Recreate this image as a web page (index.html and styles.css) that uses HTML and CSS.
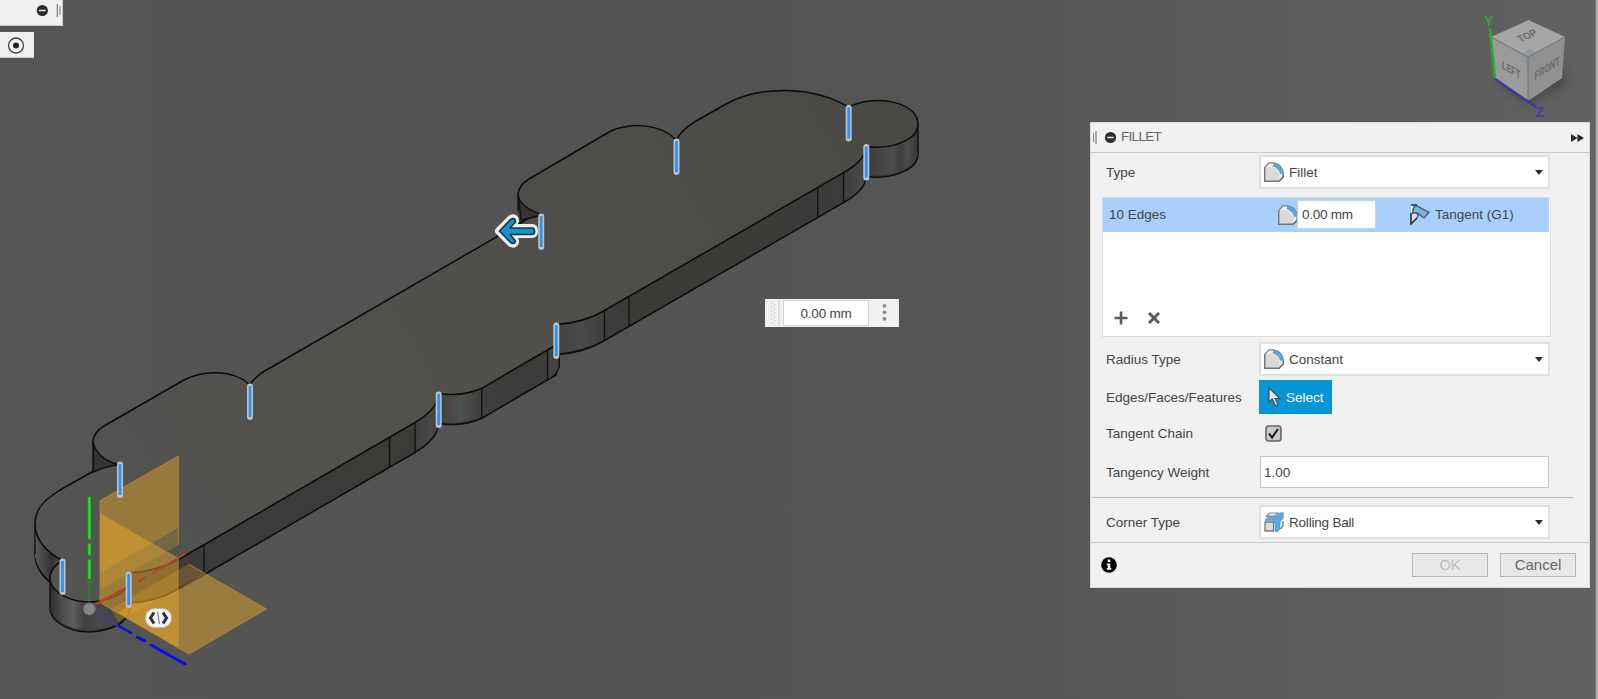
FILE: index.html
```html
<!DOCTYPE html>
<html lang="en">
<head>
<meta charset="utf-8">
<title>Fillet</title>
<link rel="stylesheet" href="styles.css">
</head>
<body>
<main class="viewport">
  <svg class="scene" viewBox="0 0 1598 699" width="1598" height="699">
    <defs>
      <linearGradient id="faceFill" gradientUnits="userSpaceOnUse" x1="100" y1="560" x2="880" y2="110">
        <stop offset="0" stop-color="#535351"/><stop offset=".45" stop-color="#51504d"/><stop offset="1" stop-color="#4a4946"/>
      </linearGradient>
      <linearGradient id="wallFill" gradientUnits="userSpaceOnUse" x1="0" y1="0" x2="1000" y2="0">
        <stop offset=".035" stop-color="#5a5a5a"/><stop offset=".048" stop-color="#3c3c3c"/>
        <stop offset=".051" stop-color="#303030"/><stop offset=".062" stop-color="#4d4d4d"/><stop offset=".073" stop-color="#5e5e5e"/><stop offset=".084" stop-color="#414141"/><stop offset=".1" stop-color="#494949"/><stop offset=".13" stop-color="#3c3c3c"/>
        <stop offset=".178" stop-color="#3b3b3a"/><stop offset=".41" stop-color="#3b3b38"/>
        <stop offset=".43" stop-color="#484847"/><stop offset=".44" stop-color="#414140"/><stop offset=".46" stop-color="#505050"/><stop offset=".482" stop-color="#3e3e3d"/>
        <stop offset=".54" stop-color="#3b3b3a"/><stop offset=".556" stop-color="#434342"/><stop offset=".58" stop-color="#4a4a49"/><stop offset=".605" stop-color="#3d3d3c"/>
        <stop offset=".63" stop-color="#3a3a37"/><stop offset=".84" stop-color="#3b3b39"/><stop offset=".862" stop-color="#484846"/>
        <stop offset=".87" stop-color="#3f3f3f"/><stop offset=".893" stop-color="#4d4d4c"/><stop offset=".9" stop-color="#3f3f3f"/><stop offset=".908" stop-color="#4c4c4b"/><stop offset=".918" stop-color="#353535"/>
      </linearGradient>
      <path id="outline" d="M62.5 560.5C46 552 35 539 35 524C35 512 42 503 50 497Q54 494 60 490L90 473Q101 467 119 464.500C103 461 93 453 93 441Q94 432 104 426L183 380.500C202 370 234 369 250 385Q256 375 270 368L530 217.500L541 215.500C526 211 518 205 518 194Q519 185 529 179L609 132C630 121 661 124 676.500 140Q681 130 696 121L726 104C760 85 813 86 848.500 107C878 93 918 103 918 124C918 139 894 150 866 146.500Q866 160 843.500 172.700L604.500 310.500Q584 323 556 324.500L556 345L481.700 388.300Q463 397 438.500 393.500Q438 409 415 422.500L178.500 559.500Q155 572 128.500 573L130 580Q127 590 118 595C100 604 75 605 59 593Q50 587 50 577Q51 567 62.500 560.500Z"/>
      <g id="sweep2"><use href="#outline"/><use href="#outline" y="1"/></g>
      <g id="sweep4"><use href="#sweep2"/><use href="#sweep2" y="2"/></g>
      <g id="sweep8"><use href="#sweep4"/><use href="#sweep4" y="4"/></g>
      <g id="sweep16"><use href="#sweep8"/><use href="#sweep8" y="8"/></g>
      <g id="edge"><path d="M0 .5V31" stroke="#bcc3c9" stroke-width="6" stroke-linecap="round"/><path d="M0 0V31" stroke="#2f90f6" stroke-width="2.800"/></g>
      <filter id="soft" x="-50%" y="-50%" width="200%" height="200%"><feGaussianBlur stdDeviation="5"/></filter>
    </defs>

    <!-- extruded body -->
    <use href="#outline" y="30" fill="#3b3b38" stroke="#0c0c0c" stroke-width="1.500"/>
    <g fill="url(#wallFill)"><use href="#sweep16"/><use href="#sweep16" y="13"/></g>
    <path d="M548 349L557 343L559 356V366Q558 374 548 379.500Z" fill="#434342"/>
    <use href="#outline" fill="url(#faceFill)" stroke="#0a0a0a" stroke-width="1.500" stroke-linejoin="round"/>
    <g stroke="#111" stroke-width="1.400" fill="none">
      <path d="M35 524V554M50 577V607M130.500 590V610M93 442V472M518 195V211M918 123V153M817.700 187.500V217.500M843.500 173V202.500M629 297.500V327M604.500 310.500V340M547.500 350V380M559.300 354V366Q558 374 548 380M481.700 388V418M415 422.500V452M389.500 437V467M204 545V575M178.500 559.500V589"/>
      <path d="M518.500 197Q521 207 541 214.500L532 217.500L521 220Z" fill="#353534"/>
      <path d="M93.500 444Q98 459 118 464.500Q104 467 93.500 472Z" fill="#353534"/>
    </g>

    <!-- construction planes -->
    <g fill="#eba928">
      <path d="M100 500.700L178.300 456V528L100 573Z" opacity=".45"/>
      <path d="M100 573L178.300 528V545L100 590Z" opacity=".22"/>
      <path d="M100 513.500L178.300 558.500V647.500L100 602.500Z" opacity=".48"/>
      <path d="M188.500 564L204 573L118 622L111 609Z" opacity=".25"/>
      <path d="M204 573L266.500 609L189 654L118 613L130 604Q154 604 178 589Z" opacity=".46"/>
    </g>
    <g fill="none" stroke="#c08c2c" stroke-width="1" opacity=".75">
      <path d="M100 500.700L178.300 456V545M100 500.700V602.500L178.300 647.500V558.500L100 513.500M188.500 564L266.500 609L189 654L111 609"/>
    </g>

    <!-- origin axes -->
    <g fill="none" stroke-linecap="round">
      <path d="M89.300 498V538M89.300 545V554M89.300 561V579" stroke="#08e80c" stroke-width="3"/>
      <path d="M89.300 580V600" stroke="#41713f" stroke-width="3"/>
      <path d="M96 604L126 588M139 581L145 578M153 573L185 554" stroke="#b5412d" stroke-width="2"/>
      <path d="M97 614L117 625" stroke="#444188" stroke-width="2"/>
      <path d="M119 626L131 633M137 637L145 641M151 645L185 664" stroke="#0a0af0" stroke-width="2.600"/>
    </g>
    <circle cx="89.300" cy="609" r="6" fill="#858585" stroke="#6c6c6c"/>

    <!-- selected edges -->
    <use href="#edge" x="120" y="464"/><use href="#edge" x="62.500" y="561"/><use href="#edge" x="128.700" y="574"/>
    <use href="#edge" x="250" y="386"/><use href="#edge" x="438.700" y="394"/><use href="#edge" x="556.300" y="325"/>
    <use href="#edge" x="541.200" y="216"/><use href="#edge" x="676.500" y="141"/><use href="#edge" x="848.700" y="107.500"/><use href="#edge" x="866.300" y="146.500"/>

    <!-- drag arrow -->
    <g stroke-linejoin="round" stroke-linecap="round">
      <path d="M499 231L511 219Q515 217 515 221L510 228H532Q534 228 534 231Q534 234 532 234H510L515 241Q515 245 511 243Z" fill="#eee" stroke="#ededed" stroke-width="8"/>
      <path d="M499.500 231L510.500 219.500Q515.500 217 515.500 222L510 228H532Q534.500 228 534.500 231.500Q534.500 234.500 532 234.500H510L515.500 241Q514.500 245 510.500 242.500Z" fill="#1594cc" stroke="#173441" stroke-width="1.700"/>
    </g>

    <!-- flip manipulator -->
    <rect x="145.500" y="608.500" width="26" height="19" rx="9" fill="#f3f3f3" stroke="#b7b7b7"/>
    <path d="M154 612.500L150.500 618L154 623.500M163 612.500L166.500 618L163 623.500" fill="none" stroke="#333" stroke-width="3"/>
    <path d="M157.500 612L159.500 624" stroke="#777" stroke-width="1"/>

    <!-- view cube -->
    <path d="M1496 82L1528 104L1568 84L1560 68Z" fill="#333" opacity=".5" filter="url(#soft)"/>
    <path d="M1491 37L1528.500 20L1565 37L1528 57Z" fill="#a6a6a6"/>
    <path d="M1491 37L1528 57V101L1495 79Z" fill="#9b9b9b"/>
    <path d="M1565 37L1528 57V101L1562 78Z" fill="#919191"/>
    <path d="M1521 54L1529 49L1536 53V60L1528 65L1521 61Z" fill="#8b929b" opacity=".65"/>
    <path d="M1491 37L1528 57L1565 37M1528 57V101" fill="none" stroke="#737373" stroke-width="1"/>
    <g class="cube-text">
      <text transform="matrix(.8 -.36 .6 .75 1520.500 42.500)">TOP</text>
      <text transform="matrix(.66 .38 0 1.050 1502 68.500)">LEFT</text>
      <text transform="matrix(.66 -.42 0 1.050 1534.500 80)">FRONT</text>
    </g>
    <path d="M1490 29L1495 78" stroke="#27ae31" stroke-width="2.500"/>
    <path d="M1495 79L1536 107" stroke="#3838a4" stroke-width="2.500"/>
    <text class="axis axis-y" x="1484" y="26">Y</text>
    <text class="axis axis-z" x="1535.500" y="116.500">Z</text>
  </svg>

  <div class="browser-bar">
    <svg width="62" height="25" viewBox="0 0 62 25"><circle cx="42.300" cy="10.500" r="5.600" fill="#2c2c2c"/><path d="M39 10.500H45.600" stroke="#eee" stroke-width="1.500"/><path d="M57.300 4V17" stroke="#777" stroke-width="1.200"/><path d="M60 6V15" stroke="#888" stroke-width="1.200"/></svg>
  </div>
  <div class="visibility-toggle">
    <svg width="34" height="25" viewBox="0 0 34 25"><circle cx="16" cy="13.500" r="7.500" fill="none" stroke="#444" stroke-width="1.300"/><circle cx="16" cy="13.500" r="3" fill="#222"/></svg>
  </div>

  <div class="value-float">
    <svg width="18" height="28" viewBox="0 0 18 28"><path d="M6.500 3V26M9.500 5V26" stroke="#d9d9d9" stroke-width="1.500" stroke-dasharray="2 2"/><path d="M14 0V28" stroke="#d6d6d6" stroke-width="1.500"/></svg>
    <span class="value-box"><span class="mm">0.00 mm</span></span>
    <svg class="dots" width="30" height="28" viewBox="0 0 30 28"><g fill="#8a8a8a"><circle cx="15.500" cy="6.800" r="1.900"/><circle cx="15.500" cy="13.300" r="1.900"/><circle cx="15.500" cy="19.800" r="1.900"/></g></svg>
  </div>

  <section class="panel">
    <svg width="0" height="0" class="defs">
      <symbol id="fillet" viewBox="0 0 20 20">
        <path d="M.7 19.300V5.500L5 .8H10Q18.500 3 19.300 11V15L15 19.300Z" fill="#f4f4f4" stroke="#777" stroke-width="1.200"/>
        <path d="M1.300 18.700V6.500H9Q14 9 14.500 18.700Z" fill="#dadada"/>
        <path d="M9.500 1Q18 2.500 19.300 10.500L16 12.500Q15 6 8.500 4.300Z" fill="#57a6dc"/>
        <path d="M1.300 18.700V6.500L3 5H8Q14.500 7 15.500 13V18.700Z" fill="#dadada"/>
        <path d="M19.300 11V15L15 19.300H.7V6" fill="none" stroke="#747474" stroke-width="1.400"/>
      </symbol>
    </svg>
    <header class="panel-head">
      <svg width="30" height="30" viewBox="0 0 30 30"><path d="M2.500 11V20" stroke="#888"/><path d="M5 9V22" stroke="#777" stroke-width="1.200"/><circle cx="19.500" cy="15.500" r="5.600" fill="#2c2c2c"/><path d="M16.300 15.500H22.700" stroke="#eee" stroke-width="1.500"/></svg>
      <h1 class="panel-title">FILLET</h1>
      <svg class="expand" width="13" height="8" viewBox="0 0 13 8"><path d="M0 0L6.500 4L0 8ZM6.500 0L13 4L6.500 8Z" fill="#282828"/></svg>
    </header>
    <div class="panel-body">
      <div class="row row-type"><label class="label">Type</label>
        <div class="select"><svg class="icon"><use href="#fillet"/></svg><span class="grow">Fillet</span><i class="caret"></i></div></div>
      <div class="list">
        <div class="list-row">
          <span class="edge-count">10 Edges</span>
          <svg class="icon"><use href="#fillet"/></svg>
          <span class="radius"><span class="mm">0.00 mm</span></span>
          <svg class="tangent-icon" width="20" height="21" viewBox="0 0 20 21"><path d="M1 1L5.500 6L1 9Z" fill="#fff"/><path d="M1 20V10L6 7.500Q9 11 7 14Z" fill="#ddd" stroke="#555" stroke-width="1.300"/><path d="M3 9Q2 4 6 1.500L19 8.500L14 14L7 9Z" fill="#7fb4db" stroke="#36536b" stroke-width="1.300"/><path d="M1 1H7M1 9V20L7 14" fill="none" stroke="#333" stroke-width="1.300"/></svg>
          <span class="tangent">Tangent (G1)</span>
        </div>
        <div class="list-tools">
          <svg width="14" height="14" viewBox="0 0 14 14"><path d="M7 .5V13.500M.5 7H13.500" stroke="#5c5c5c" stroke-width="2.600"/></svg>
          <svg width="12" height="12" viewBox="0 0 12 12"><path d="M1 1L11 11M11 1L1 11" stroke="#5c5c5c" stroke-width="3"/></svg>
        </div>
      </div>
      <div class="row row-radius"><label class="label">Radius Type</label>
        <div class="select"><svg class="icon"><use href="#fillet"/></svg><span class="grow">Constant</span><i class="caret"></i></div></div>
      <div class="row row-pick"><label class="label">Edges/Faces/Features</label>
        <button class="pick"><svg width="13" height="20" viewBox="0 0 13 20"><path d="M1 1V15L4.300 12L7.500 19L10 17.700L7 11.500H12Z" fill="#e8e8e8" stroke="#3c4a52" stroke-width="1.100"/></svg>Select</button></div>
      <div class="row row-chain"><label class="label">Tangent Chain</label>
        <svg class="check" width="17" height="17" viewBox="0 0 17 17"><rect x="1" y="1" width="15" height="15" rx="3" fill="#c9c9c9" stroke="#666" stroke-width="1.600"/><path d="M4 8.500L7 12.500L13 4" fill="none" stroke="#151515" stroke-width="2"/></svg></div>
      <div class="row row-weight"><label class="label">Tangency Weight</label><div class="input">1.00</div></div>
      <div class="rule"></div>
      <div class="row row-corner"><label class="label">Corner Type</label>
        <div class="select"><svg class="icon" viewBox="0 0 20 20"><path d="M2 5L5.500 1H14L11 4H3" fill="#eee" stroke="#888" stroke-width="1.200"/><path d="M1 10H9.500V19H1Z" fill="#ddd" stroke="#777" stroke-width="1.300"/><path d="M19 9V14L16.500 17" fill="none" stroke="#777" stroke-width="1.300"/><path d="M1 8.500L4 4.500H12L16 .8H19.300V6L16 10V17L14 19.500H11V12Q11 9 8 8.500Z" fill="#5aaae0" stroke="#458fc2" stroke-width=".6"/></svg><span class="grow rolling">Rolling Ball</span><i class="caret"></i></div></div>
    </div>
    <footer class="panel-foot">
      <svg class="info" width="16" height="16" viewBox="0 0 16 16"><circle cx="8" cy="8" r="7.800" fill="#000"/><path d="M6.700 2.500H9.300V5H6.700ZM5.800 6.500H9.300V11H10.300V12.800H5.800V11H6.800V8.200H5.800Z" fill="#fff"/></svg>
      <button class="btn btn-off">OK</button>
      <button class="btn">Cancel</button>
    </footer>
  </section>
  <div class="window-edge"></div>
</main>
</body>
</html>
```
FILE: styles.css
```css
* { box-sizing: border-box; }
body { margin: 0; overflow: hidden; font: 13.5px "Liberation Sans", Arial, sans-serif; color: #444; }
.viewport { position: relative; width: 1598px; height: 699px; overflow: hidden; background: linear-gradient(90deg, #555 0%, #535353 35%, #565656 65%, #616161 100%); }
.scene { display: block; }
svg { flex: none; }
.defs { position: absolute; }
.cube-text { font: bold 11px "Liberation Sans", Arial, sans-serif; fill: #666a6f; }
.axis { font: bold 14px "Liberation Sans", Arial, sans-serif; }
.axis-y { fill: #3e9c46; }
.axis-z { fill: #4040a8; }

.browser-bar, .visibility-toggle { position: absolute; left: 0; background: #f1f1f1; display: flex; }
.browser-bar { top: 0; width: 63px; height: 26px; border-right: 1px solid #ccc; border-bottom: 1px solid #ccc; }
.visibility-toggle { top: 32px; width: 34px; height: 26px; border-bottom: 1px solid #ccc; }

.value-float { position: absolute; left: 765px; top: 299px; width: 134px; height: 28px; display: flex; align-items: center; background: #f1f1f1; }
.value-box { width: 86px; height: 26px; border: 1px solid #d2d2d2; background: #fff; display: flex; align-items: center; justify-content: center; }
.mm { letter-spacing: -.25px; }

.panel { position: absolute; left: 1090px; top: 122px; width: 500px; height: 466px; display: flex; flex-direction: column; background: #f1f1f1; border: 1px solid #dadada; }
.panel-head { height: 30px; display: flex; align-items: center; border-bottom: 1px solid #cbcbcb; padding-right: 5px; margin-bottom: 2px; }
.panel-head svg:first-child { margin-top: -2px; }
.panel-title { margin: 0 auto 2px 0; font-size: 13.5px; font-weight: 400; letter-spacing: -.7px; color: #666; }
.panel-body { height: 387px; display: flex; flex-direction: column; }
.row { display: flex; align-items: center; padding-left: 15px; flex: none; }
.label { width: 153px; flex: none; }
.select { width: 291px; height: 34px; display: flex; align-items: center; padding: 0 5px 0 4px; background: #fff; border: 2px solid #e0e0e0; }
.select .icon { margin-left: -1px; margin-right: 5px; }
.icon { width: 20px; height: 20px; }
.grow { flex: 1; }
.rolling { letter-spacing: -.2px; }
.caret { border: 4px solid transparent; border-top: 5px solid #2c2c2c; border-bottom: 0; }
.list { width: 449px; height: 140px; margin: 8px 0 5px 11px; border: 1px solid #dcdcdc; background: #fff; display: flex; flex-direction: column; justify-content: space-between; flex: none; }
.list-row { height: 34px; background: #a9cffe; display: flex; align-items: center; padding: 0 0 1px 6px; margin-right: 1px; }
.edge-count { width: 169px; }
.list-row .icon { margin-right: -1px; }
.radius { width: 79px; height: 29px; background: #fff; border: 1px solid #c5d4e4; display: flex; align-items: center; padding-left: 4px; }
.tangent-icon { margin: 0 5px 0 34px; }
.list-tools { display: flex; align-items: center; gap: 20px; padding: 0 0 11px 11px; }
.pick { width: 73px; height: 34px; border: 0; background: #0696d7; color: #fff; font: inherit; display: flex; align-items: center; gap: 5px; padding: 0 0 0 9px; }
.row-pick { height: 34px; margin-top: 4px; }
.row-chain { height: 17px; margin-top: 11px; }
.check { margin-left: 6px; }
.row-weight { height: 32px; margin-top: 14px; }
.input { width: 289px; height: 32px; border: 1px solid #c8c8c8; background: #fff; display: flex; align-items: center; padding-left: 3px; margin-left: 1px; }
.rule { height: 1px; width: 481px; margin: 9px 0 7px 1px; background: #bdbdbd; flex: none; }
.panel-foot { flex: 1; border-top: 1px solid #c8c8c8; display: flex; align-items: center; padding: 0 13px 1px 10px; gap: 12px; }
.info { margin-right: auto; }
.btn { width: 76px; height: 24px; border: 1px solid #b5b5b5; background: #e8e8e8; color: #666; font: 15px "Liberation Sans", Arial, sans-serif; padding: 0; }
.btn-off { color: #bcbcbc; font-size: 14.5px; }
.window-edge { position: absolute; right: 0; top: 0; width: 3px; height: 699px; background: #a9a9a9; border-left: 1px solid #7c7c7c; }
```
